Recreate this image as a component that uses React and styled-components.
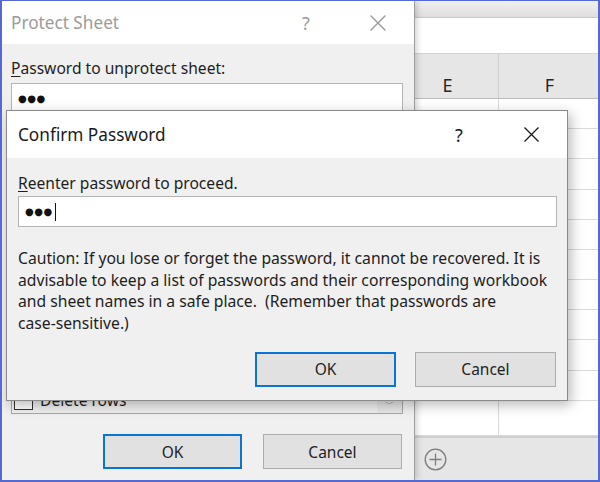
import React from 'react';
import styled, { createGlobalStyle } from 'styled-components';

const Global = createGlobalStyle`
  html, body { margin: 0; padding: 0; background: #ffffff; }
  * { box-sizing: border-box; }
  body { font-family: "Noto Sans", "Open Sans", sans-serif; color: #1e1e1e; }
`;

const UI = `"Noto Sans", "Open Sans", sans-serif`;

const Desktop = styled.div`
  position: relative;
  width: 600px;
  height: 482px;
  border: 2px solid #5468d6;
  border-top-width: 1px;
  display: flex;
  overflow: hidden;
  background: #f0f0f0;
`;

/* ---------- dialog parts ---------- */
const Window = styled.div`
  display: flex;
  flex-direction: column;
  background: #f0f0f0;
  font-family: ${UI};
`;

const ProtectWindow = styled(Window)`
  width: 413px;
  flex: none;
  border-right: 1px solid #9d9d9d;
  box-shadow: 2px 0 6px rgba(0, 0, 0, 0.18);
  position: relative;
  z-index: 1;
`;

const ConfirmWindow = styled(Window)`
  position: absolute;
  left: 4px;
  top: 109px;
  width: 562px;
  height: 291px;
  border: 1px solid #8a8a8a;
  box-shadow: 3px 4px 12px rgba(0, 0, 0, 0.28);
  z-index: 5;
`;

const TitleBar = styled.div`
  display: flex;
  align-items: center;
  height: ${(p) => p.$h}px;
  background: #ffffff;
  padding-left: ${(p) => p.$pad}px;
  flex: none;
`;

const Title = styled.div`
  flex: 1;
  font-size: 17.2px;
  color: ${(p) => (p.$inactive ? '#9b9b9b' : '#1a1a1a')};
  white-space: nowrap;
`;

const TitleButton = styled.div`
  width: 72px;
  height: 100%;
  display: flex;
  align-items: center;
  justify-content: center;
  font-size: 18px;
  color: ${(p) => (p.$inactive ? '#9b9b9b' : '#1a1a1a')};
`;

const Body = styled.div`
  flex: 1;
  display: flex;
  flex-direction: column;
  padding: ${(p) => p.$pad};
`;

const Label = styled.div`
  font-size: 15.6px;
  line-height: 20px;
  white-space: nowrap;
  & u { text-decoration-thickness: 1px; text-underline-offset: 2px; }
`;

const Field = styled.div`
  height: ${(p) => p.$h}px;
  margin-top: ${(p) => p.$mt}px;
  margin-right: ${(p) => p.$mr || 0}px;
  background: #ffffff;
  border: 1px solid #b4b4b4;
  display: flex;
  align-items: center;
  padding-left: 6px;
  flex: none;
`;

const Dots = styled.span`
  font-family: "DejaVu Sans", sans-serif;
  font-size: 10px;
  letter-spacing: 0.5px;
  color: #111;
`;

const Caret = styled.span`
  display: inline-block;
  width: 1px;
  height: 18px;
  background: #111;
  margin-left: 2px;
`;

const Caution = styled.p`
  margin: 21px 0 0 0;
  font-size: 15.7px;
  line-height: 21.7px;
  color: #1e1e1e;
  white-space: nowrap;
`;

const ButtonRow = styled.div`
  display: flex;
  justify-content: flex-end;
  gap: ${(p) => p.$gap}px;
  margin-top: ${(p) => p.$mt}px;
  margin-right: ${(p) => p.$mr || 0}px;
`;

const Button = styled.div`
  width: ${(p) => p.$w}px;
  height: 35px;
  display: flex;
  align-items: center;
  justify-content: center;
  background: #e1e1e1;
  border: ${(p) => (p.$default ? '2px solid #0a74d6' : '1px solid #adadad')};
  font-size: 15.5px;
  color: #1e1e1e;
`;

/* ---------- protect sheet list ---------- */
const ListBox = styled.div`
  margin-top: 10px;
  margin-right: 11px;
  height: 291px;
  border: 1px solid #a8a8a8;
  display: flex;
  overflow: hidden;
  flex: none;
`;

const ListItems = styled.div`
  flex: 1;
  display: flex;
  flex-direction: column;
  justify-content: flex-end;
  padding: 0 0 2px 2px;
`;

const CheckRow = styled.div`
  display: flex;
  align-items: center;
  gap: 7px;
  height: 22px;
  font-size: 15.6px;
`;

const CheckBox = styled.span`
  width: 19px;
  height: 19px;
  border: 1px solid #333;
  background: #fff;
  flex: none;
`;

const ScrollBar = styled.div`
  width: 25px;
  display: flex;
  flex-direction: column;
  justify-content: flex-end;
  align-items: center;
  background: #e6e6e6;
  color: #555;
  font-size: 9px;
  padding-bottom: 2px;
`;

/* ---------- sheet ---------- */
const Sheet = styled.div`
  flex: 1;
  display: flex;
  flex-direction: column;
  background: #ffffff;
  overflow: hidden;
  font-family: ${UI};
`;

const TopStrip = styled.div`
  height: 17px;
  background: linear-gradient(#f0f0f0, #dedede);
  border-bottom: 1px solid #c9c9c9;
  flex: none;
`;

const FormulaBar = styled.div`
  height: 36px;
  background: #ffffff;
  border-bottom: 1px solid #d4d4d4;
  flex: none;
`;

const Columns = styled.div`
  display: grid;
  grid-template-columns: 102px 102px;
  margin-left: -18px;
  flex: none;
`;

const ColHead = styled.div`
  height: 45px;
  background: #e6e6e6;
  border-bottom: 1px solid #bcbcbc;
  border-right: 1px solid #cfcfcf;
  display: flex;
  align-items: center;
  justify-content: center;
  padding-top: 18px;
  font-size: 18px;
  color: #262626;
`;

const Cell = styled.div`
  height: ${(p) => p.$h}px;
  border-bottom: 1px solid #dadada;
  border-right: 1px solid #dadada;
  background: #fff;
`;

const TabBar = styled.div`
  flex: 1;
  background: #e6e6e6;
  border-top: 2px solid #cfcfcf;
  display: flex;
  align-items: center;
  padding-left: 9px;
`;

const rows = [30, 30, 31, 30, 30, 30, 30, 30, 31, 30, 35];

const CloseIcon = ({ size = 15 }) => (
  <svg width={size} height={size} viewBox="0 0 15 15">
    <path d="M0.5 0.5 L14.5 14.5 M14.5 0.5 L0.5 14.5" stroke="currentColor" strokeWidth="1.3" fill="none" />
  </svg>
);

const PlusCircle = () => (
  <svg width="23" height="23" viewBox="0 0 23 23">
    <circle cx="11.5" cy="11.5" r="10.3" stroke="#7d7d7d" strokeWidth="1.3" fill="none" />
    <path d="M11.5 5.5 V17.5 M5.5 11.5 H17.5" stroke="#7d7d7d" strokeWidth="1.3" />
  </svg>
);

export default function App() {
  return (
    <>
      <Global />
      <Desktop>
        <ProtectWindow>
          <TitleBar $h={43} $pad={9}>
            <Title $inactive>Protect Sheet</Title>
            <TitleButton $inactive>?</TitleButton>
            <TitleButton $inactive><CloseIcon size={16} /></TitleButton>
          </TitleBar>
          <Body $pad="14px 0 0 9px">
            <Label><u>P</u>assword to unprotect sheet:</Label>
            <Field $h={30} $mt={5} $mr={11}><Dots>●●●</Dots></Field>
            <ListBox>
              <ListItems>
                <CheckRow><CheckBox />Delete rows</CheckRow>
              </ListItems>
              <ScrollBar>﹀</ScrollBar>
            </ListBox>
            <ButtonRow $gap={21} $mt={20} $mr={12}>
              <Button $w={139} $default>OK</Button>
              <Button $w={139}>Cancel</Button>
            </ButtonRow>
          </Body>
        </ProtectWindow>

        <Sheet>
          <TopStrip />
          <FormulaBar />
          <Columns>
            <ColHead>E</ColHead>
            <ColHead>F</ColHead>
            {rows.map((h, i) => (
              <React.Fragment key={i}>
                <Cell $h={h} />
                <Cell $h={h} />
              </React.Fragment>
            ))}
          </Columns>
          <TabBar><PlusCircle /></TabBar>
        </Sheet>

        <ConfirmWindow>
          <TitleBar $h={47} $pad={11}>
            <Title>Confirm Password</Title>
            <TitleButton>?</TitleButton>
            <TitleButton><CloseIcon /></TitleButton>
          </TitleBar>
          <Body $pad="15px 0 0 11px">
            <Label><u>R</u>eenter password to proceed.</Label>
            <Field $h={31} $mt={3} $mr={10}><Dots>●●●</Dots><Caret /></Field>
            <Caution>
              Caution: If you lose or forget the password, it cannot be recovered. It is
              <br />
              advisable to keep a list of passwords and their corresponding workbook
              <br />
              and sheet names in a safe place.&nbsp; (Remember that passwords are
              <br />
              case-sensitive.)
            </Caution>
            <ButtonRow $gap={19} $mt={17} $mr={11}>
              <Button $w={141} $default>OK</Button>
              <Button $w={141}>Cancel</Button>
            </ButtonRow>
          </Body>
        </ConfirmWindow>
      </Desktop>
    </>
  );
}
